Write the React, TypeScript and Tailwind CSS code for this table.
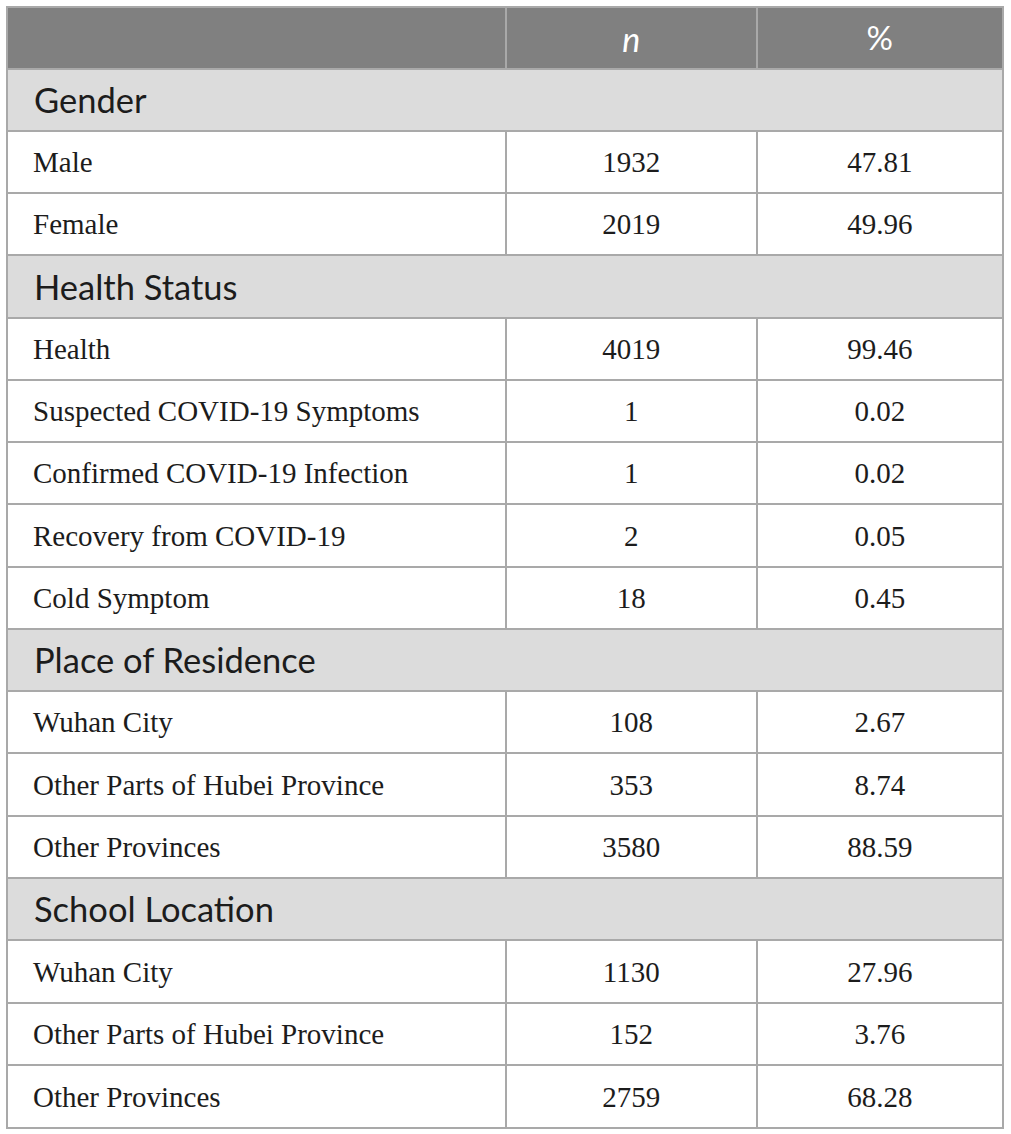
import React from "react";

type Row =
  | { kind: "section"; label: string; h: number }
  | { kind: "data"; label: string; n: string; p: string; h: number };

const rows: Row[] = [
  { kind: "section", label: "Gender", h: 62 },
  { kind: "data", label: "Male", n: "1932", p: "47.81", h: 62 },
  { kind: "data", label: "Female", n: "2019", p: "49.96", h: 62 },
  { kind: "section", label: "Health Status", h: 63 },
  { kind: "data", label: "Health", n: "4019", p: "99.46", h: 62 },
  { kind: "data", label: "Suspected COVID-19 Symptoms", n: "1", p: "0.02", h: 62 },
  { kind: "data", label: "Confirmed COVID-19 Infection", n: "1", p: "0.02", h: 62 },
  { kind: "data", label: "Recovery from COVID-19", n: "2", p: "0.05", h: 63 },
  { kind: "data", label: "Cold Symptom", n: "18", p: "0.45", h: 62 },
  { kind: "section", label: "Place of Residence", h: 62 },
  { kind: "data", label: "Wuhan City", n: "108", p: "2.67", h: 62 },
  { kind: "data", label: "Other Parts of Hubei Province", n: "353", p: "8.74", h: 63 },
  { kind: "data", label: "Other Provinces", n: "3580", p: "88.59", h: 62 },
  { kind: "section", label: "School Location", h: 62 },
  { kind: "data", label: "Wuhan City", n: "1130", p: "27.96", h: 63 },
  { kind: "data", label: "Other Parts of Hubei Province", n: "152", p: "3.76", h: 62 },
  { kind: "data", label: "Other Provinces", n: "2759", p: "68.28", h: 63 },
];

const sans = "font-['Lato','Open_Sans',sans-serif]";
const serif = "font-['Liberation_Serif','Times_New_Roman',serif]";

export default function App() {
  return (
    <div className="bg-white w-[1011px] h-[1134px] pl-[6px] pt-[6px]">
      <div className="w-[998px] border-l-2 border-t-2 border-[#a9a9a9]">
        <div className="flex h-[62px] bg-[#808080] text-white">
          <div className="w-[500px] border-r-2 border-b-2 border-[#a9a9a9]" />
          <div className={`w-[251px] border-r-2 border-b-2 border-[#a9a9a9] flex items-center justify-center ${sans} text-[34px] italic`}>
            n
          </div>
          <div className={`w-[247px] border-r-2 border-b-2 border-[#a9a9a9] flex items-center justify-center ${sans} text-[33px]`}>
            %
          </div>
        </div>
        {rows.map((r, i) =>
          r.kind === "section" ? (
            <div
              key={i}
              className={`flex items-center bg-[#dcdcdc] border-r-2 border-b-2 border-[#a9a9a9] pl-[26px] ${sans} text-[34.5px] text-[#1c1c1c]`}
              style={{ height: r.h }}
            >
              {r.label}
            </div>
          ) : (
            <div key={i} className={`flex ${serif} text-[29px] text-[#1c1c1c]`} style={{ height: r.h }}>
              <div className="w-[500px] border-r-2 border-b-2 border-[#a9a9a9] flex items-center pl-[25px] pt-[2px]">
                {r.label}
              </div>
              <div className="w-[251px] border-r-2 border-b-2 border-[#a9a9a9] flex items-center justify-center pt-[2px]">
                {r.n}
              </div>
              <div className="w-[247px] border-r-2 border-b-2 border-[#a9a9a9] flex items-center justify-center pt-[2px]">
                {r.p}
              </div>
            </div>
          )
        )}
      </div>
    </div>
  );
}
